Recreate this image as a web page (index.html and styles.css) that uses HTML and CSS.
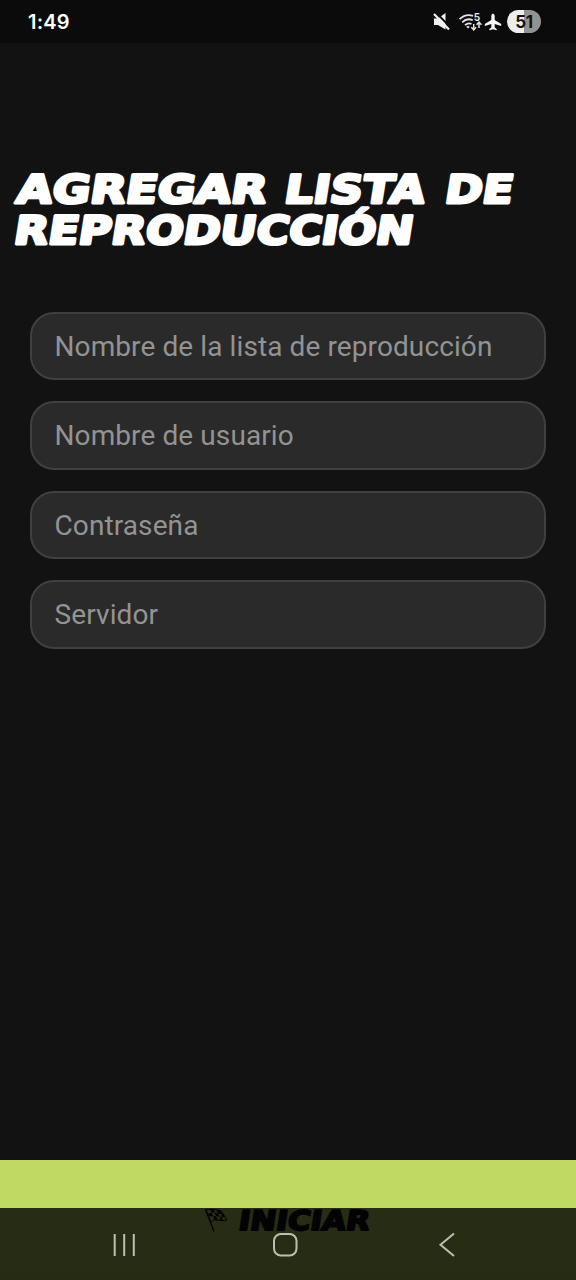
FILE: index.html
```html
<!DOCTYPE html>
<html lang="es">
<head>
<meta charset="utf-8">
<title>Agregar lista de reproducción</title>
<link rel="stylesheet" href="styles.css">
</head>
<body>
<div class="screen">
  <header class="status">
    <span class="clock">1:49</span>
    <div class="indicators">
      <svg class="mute" width="18" height="18" viewBox="0 0 18 18"><path d="M1 5.500h4L12.500 0v16.500L5 12H1z" fill="#f2f2f2"/><path d="M2.500 -1 18.500 15.500" stroke="#0b0b0b" stroke-width="1.800"/><path d="M1 1 16 16.500" stroke="#f2f2f2" stroke-width="2.200"/></svg>
      <svg class="wifi" width="24" height="18" viewBox="0 0 24 18" fill="none" stroke="#e2e2e2" stroke-width="1.8"><path d="M.5 6.200Q6.500 .3 14 2.800M3.200 9.300Q8 4.500 13.800 7.200M6 12.200Q9 9.300 12.500 10.800"/><path d="M7.200 13.800Q9 12.300 10.800 13.800L9 15.500z" fill="#e2e2e2" stroke="none"/><path d="M14.700 11v5.500m-2.400-2.200 2.400 2.500 2.400-2.500M20 15V9.300m-2.400 2.400 2.400-2.500 2.400 2.500" stroke-width="1.500"/><text x="14.700" y="8" class="band">5</text></svg>
      <svg class="plane" width="18" height="18" viewBox="0 0 18 18"><path d="M9 .5Q10.700 1 10.700 3v4l6.500 4v2l-6.500-2v3.400l2 1.600v1.300L9 16.300l-3.700 1v-1.300l2-1.600V11l-6.500 2v-2l6.500-4V3Q7.300 1 9 .5z" fill="#f6f6f6"/></svg>
      <span class="battery">51</span>
    </div>
  </header>
  <main class="content">
    <h1 class="title">
      <svg width="576" height="96" viewBox="0 160 576 96" class="display light">
        <text transform="translate(15 203.200) skewX(-9)" textLength="250" lengthAdjust="spacingAndGlyphs">AGREGAR</text>
        <text transform="translate(283 203.200) skewX(-9)" textLength="140" lengthAdjust="spacingAndGlyphs">LISTA</text>
        <text transform="translate(443.500 203.200) skewX(-9)" textLength="68" lengthAdjust="spacingAndGlyphs">DE</text>
        <text transform="translate(12.500 244.200) skewX(-9)" textLength="399" lengthAdjust="spacingAndGlyphs">REPRODUCCIÓN</text>
      </svg>
    </h1>
    <form class="fields">
      <div class="field">Nombre de la lista de reproducción</div>
      <div class="field">Nombre de usuario</div>
      <div class="field">Contraseña</div>
      <div class="field">Servidor</div>
    </form>
  </main>
  <div class="start">
    <svg class="flag" width="26" height="26" viewBox="0 0 26 26"><path d="M2.500 1.500 11 23.500" stroke="#111" stroke-width="1.300"/><path d="M3 2Q8 .5 11.500 1.500T18 2.500L24 12Q19 13.500 15 12T8 14z" fill="none" stroke="#111" stroke-width="1"/><path d="M7 1.500l3.500-.5 1.500 3.500-3.500.3zM13.500 2.300l3.500.2 2 3.500-4-.2zM5 5.500l3.500-.7L10.300 8l-3.500.6zM11.500 4.500l3.500 1.300 1.700 3L13 8zM18.500 6l1.500-.3 2 3.300-3.500.2zM10.300 8l2.700 0 1.700 4-3.200.2zM16.700 8.800l1.800.4 2 3.500-3 .2z" fill="#111"/></svg>
    <svg class="display dark" width="140" height="30" viewBox="236 1206 140 30"><text transform="translate(237.500 1230.200) skewX(-9)" textLength="131" lengthAdjust="spacingAndGlyphs">INICIAR</text></svg>
  </div>
  <nav class="system-nav">
    <svg width="576" height="72" viewBox="0 0 576 72" fill="none" stroke="#bcc0b2" stroke-width="2"><path d="M114.700 26v22M124.200 26v22M133.800 26v22"/><rect x="274" y="26" width="22.500" height="21.500" rx="7"/><path d="M454 25.500 440.500 36.700 454 48"/></svg>
  </nav>
</div>
</body>
</html>
```
FILE: styles.css
```css
* { box-sizing: border-box; }
body { margin: 0; background: #121212; font-family: Roboto, sans-serif; }
.screen { position: relative; width: 576px; height: 1280px; overflow: hidden; display: flex; flex-direction: column; background: #121212; }
.status { height: 43px; padding: 0 35px 0 28px; display: flex; align-items: center; justify-content: space-between; background: #0b0b0b; color: #fff; }
.clock { font: 600 20px/43px Inter, sans-serif; padding-top: 1px; letter-spacing: 0.2px; }
.indicators { display: flex; align-items: center; }
.indicators svg { overflow: visible; }
.mute { margin-right: 8px; }
.wifi { margin-right: 1px; }
.plane { margin-right: 5px; }
.band { font: 700 10px Inter, sans-serif; fill: #e2e2e2; stroke: none; }
.battery { width: 34px; height: 23px; border-radius: 12px; background: linear-gradient(90deg, #ededed 50%, #929292 50%); color: #111; text-align: center; font: 700 17px/24px Inter, sans-serif; letter-spacing: -0.3px; }
.content { flex: 1; padding-top: 117px; }
.title { margin: 0; height: 96px; font-size: 42px; }
.title svg, .start svg, .system-nav svg { display: block; }
.display { font-family: "DejaVu Sans", sans-serif; font-weight: 700; stroke-linejoin: round; }
.light { font-size: 39px; fill: #fff; stroke: #fff; stroke-width: 3px; }
.dark { font-size: 27px; fill: #111; stroke: #111; stroke-width: 2px; }
.fields { margin: 0; padding: 55.5px 30px 0; display: flex; flex-direction: column; gap: 21px; }
.field { height: 68.5px; padding: 0 22.5px; border: 1.5px solid #404040; border-width: 2px; border-radius: 24px; background: #2a2a2a; color: #939393; font-size: 28px; line-height: 66px; letter-spacing: 0.1px; white-space: nowrap; }
.start { height: 120px; padding: 46px 0 0 203px; display: flex; gap: 7px; background: #c0d963; }
.flag { margin-top: 2px; }
.system-nav { position: absolute; left: 0; bottom: 0; width: 576px; height: 72px; background: rgba(0, 0, 0, 0.8); }
```
